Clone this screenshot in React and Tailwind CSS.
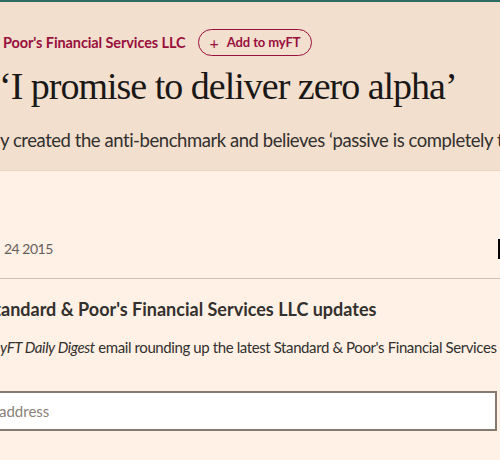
import React from "react";

const sans = { fontFamily: 'Lato, "Open Sans", sans-serif' };

// The page is scrolled sideways in the reference: this puts the hidden part of a
// line to the left of where the visible part starts.
function Hidden({ children }) {
  return (
    <span className="inline-block w-[300px] -ml-[300px] text-right whitespace-pre">
      {children}
    </span>
  );
}

export default function App() {
  return (
    <div
      className="w-[500px] h-[460px] overflow-hidden bg-[#fff1e5] text-[#33302e]"
      style={sans}
    >
      {/* header band */}
      <div className="bg-[#f2dfce] border-t-2 border-[#2e6b63] border-b border-b-[#ead4c2] h-[171px]">
        <div className="flex items-center gap-[12px] pt-[27px] pl-[3px] whitespace-nowrap">
          <span className="text-[14.5px] font-bold tracking-[-0.1px] text-[#990f3d]">
            <Hidden>Standard &amp; </Hidden>Poor's Financial Services LLC
          </span>
          <button className="flex items-center gap-[8px] h-[27px] pl-[11px] pr-[11px] rounded-full border border-[#990f3d] text-[13px] font-bold tracking-[-0.1px] text-[#990f3d]">
            <span className="text-[16px] font-normal leading-none">+</span>
            Add to myFT
          </button>
        </div>
        <h1
          className="mt-[8px] -ml-[1px] text-[38px] leading-[44px] tracking-[-1px] text-[#1a1817] whitespace-nowrap"
          style={{ fontFamily: '"Liberation Serif", serif' }}
        >
          ‘I promise to deliver zero alpha’
        </h1>
        <p className="mt-[19px] text-[18.5px] leading-[26px] tracking-[-0.45px] text-[#33302e] whitespace-nowrap">
          <Hidden>Fund manager who recentl</Hidden>y created the anti-benchmark and believes ‘passive is completely the way forward’
        </p>
      </div>

      {/* byline row */}
      <div className="flex items-center justify-between h-[108px] border-b border-[#ccc1b7] pt-[48px]">
        <span className="text-[14px] tracking-[-0.5px] text-[#66605c] whitespace-nowrap">
          <Hidden>March</Hidden>
          <span className="ml-[4px]">24 2015</span>
        </span>
        <span className="w-[3px] h-[20px] bg-black mr-[-1px]"></span>
      </div>

      {/* alerts */}
      <div className="pt-[19px]">
        <h2 className="ml-[1px] text-[18px] font-bold leading-[22px] whitespace-nowrap">
          <Hidden>St</Hidden>andard &amp; Poor's Financial Services LLC updates
        </h2>
        <p className="mt-[17px] text-[15px] leading-[20px] tracking-[-0.4px] whitespace-nowrap">
          <Hidden>We’ll send you a m</Hidden>
          <span className="italic">yFT Daily Digest</span> email rounding up the latest Standard &amp; Poor's Financial Services LLC news every morning.
        </p>
        <div className="mt-[34px] -ml-[40px] w-[537px] h-[40px] border-2 border-[#857a70] bg-white flex items-center pl-[37px]">
          <span className="text-[15px] text-[#8a817a] whitespace-nowrap">
            <Hidden>Enter your email </Hidden>address
          </span>
        </div>
      </div>
    </div>
  );
}
